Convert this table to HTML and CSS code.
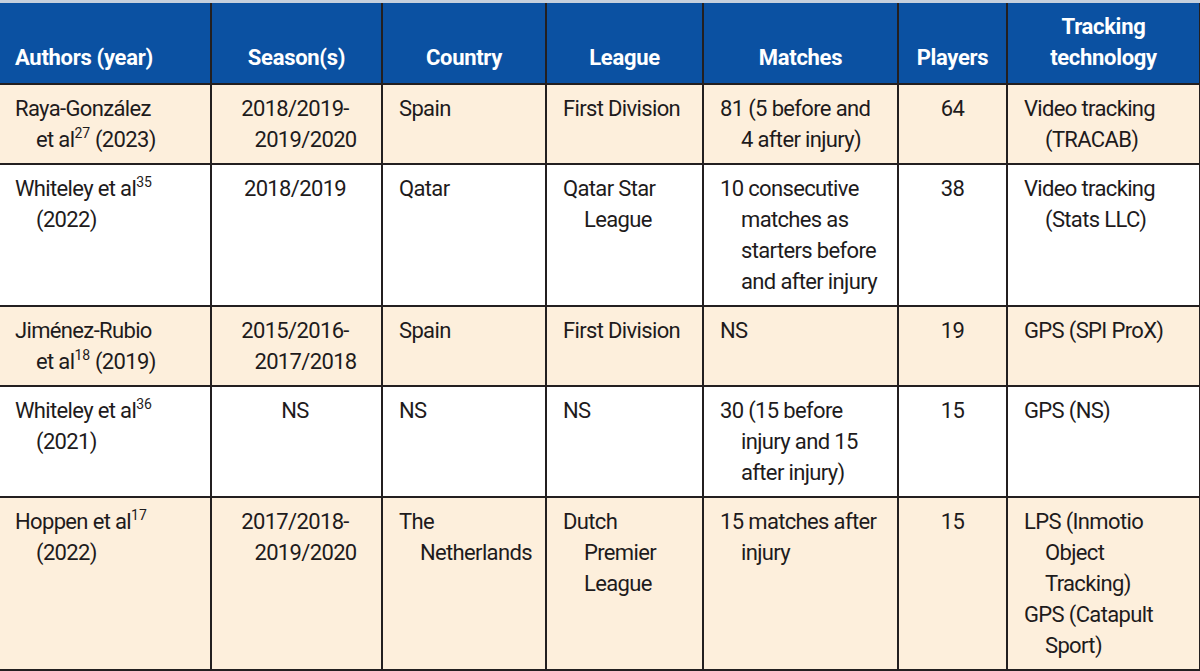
FILE: index.html
```html
<!DOCTYPE html>
<html>
<head>
<meta charset="utf-8">
<link rel="stylesheet" href="styles.css">
</head>
<body>
<table class="data">
  <colgroup>
    <col class="c1"><col class="c2"><col class="c3"><col class="c4"><col class="c5"><col class="c6"><col class="c7">
  </colgroup>
  <thead>
    <tr>
      <th class="left">Authors (year)</th>
      <th>Season(s)</th>
      <th>Country</th>
      <th>League</th>
      <th>Matches</th>
      <th>Players</th>
      <th>Tracking<br>technology</th>
    </tr>
  </thead>
  <tbody>
    <tr class="shade">
      <td class="hang">Raya-González<br>et al<sup>27</sup> (2023)</td>
      <td class="season">2018/2019-<br>2019/2020</td>
      <td class="hang">Spain</td>
      <td class="hang">First Division</td>
      <td class="hang">81 (5 before and<br>4 after injury)</td>
      <td class="num">64</td>
      <td class="hang">Video tracking<br>(TRACAB)</td>
    </tr>
    <tr>
      <td class="hang">Whiteley et al<sup>35</sup><br>(2022)</td>
      <td class="season">2018/2019</td>
      <td class="hang">Qatar</td>
      <td class="hang">Qatar Star<br>League</td>
      <td class="hang">10 consecutive<br>matches as<br>starters before<br>and after injury</td>
      <td class="num">38</td>
      <td class="hang">Video tracking<br>(Stats LLC)</td>
    </tr>
    <tr class="shade">
      <td class="hang">Jiménez-Rubio<br>et al<sup>18</sup> (2019)</td>
      <td class="season">2015/2016-<br>2017/2018</td>
      <td class="hang">Spain</td>
      <td class="hang">First Division</td>
      <td class="hang">NS</td>
      <td class="num">19</td>
      <td class="hang">GPS (SPI ProX)</td>
    </tr>
    <tr>
      <td class="hang">Whiteley et al<sup>36</sup><br>(2021)</td>
      <td class="season">NS</td>
      <td class="hang">NS</td>
      <td class="hang">NS</td>
      <td class="hang">30 (15 before<br>injury and 15<br>after injury)</td>
      <td class="num">15</td>
      <td class="hang">GPS (NS)</td>
    </tr>
    <tr class="shade">
      <td class="hang">Hoppen et al<sup>17</sup><br>(2022)</td>
      <td class="season">2017/2018-<br>2019/2020</td>
      <td class="hang">The<br>Netherlands</td>
      <td class="hang">Dutch<br>Premier<br>League</td>
      <td class="hang">15 matches after<br>injury</td>
      <td class="num">15</td>
      <td class="multi"><div class="entry">LPS (Inmotio<br>Object<br>Tracking)</div><div class="entry">GPS (Catapult<br>Sport)</div></td>
    </tr>
  </tbody>
</table>
</body>
</html>
```

FILE: styles.css
```css
html, body {
  margin: 0;
  padding: 0;
  background: #ffffff;
}

.data {
  width: 1200px;
  table-layout: fixed;
  border-collapse: collapse;
  font-family: Roboto, "Liberation Sans", sans-serif;
  font-size: 22px;
  line-height: 31px;
  color: #1e1b1c;
  border-top: 3px solid #c6d0dd;
  white-space: nowrap;
}

.c1 { width: 211px; }
.c2 { width: 171px; }
.c3 { width: 164px; }
.c4 { width: 157px; }
.c5 { width: 195px; }
.c6 { width: 109px; }
.c7 { width: 193px; }

.data th,
.data td {
  border: 2px solid #231f20;
  padding: 8px 4px 8px 16px;
  overflow: visible;
}

.data tr > :first-child {
  border-left: none;
}

.data thead th {
  background: #0b51a2;
  color: #ffffff;
  font-weight: bold;
  text-align: center;
  vertical-align: bottom;
  padding-left: 4px;
  padding-right: 4px;
  padding-bottom: 10px;
  letter-spacing: -0.3px;
}

.data thead th.left {
  text-align: left;
  padding-left: 15px;
}

.data td {
  vertical-align: top;
  letter-spacing: -0.65px;
}

.shade td {
  background: #fdefdc;
}

.hang {
  text-align: left;
  padding-left: 37px !important;
  text-indent: -21px;
}

.data tr > td.hang:first-child {
  padding-left: 36px !important;
}

.multi {
  text-align: left;
  padding-left: 16px !important;
}

.entry {
  padding-left: 21px;
  text-indent: -21px;
}

.season {
  text-align: center;
  padding-left: 18px !important;
  padding-right: 0 !important;
  text-indent: -21px;
}

.num {
  text-align: center;
  padding-left: 4px !important;
  padding-right: 4px !important;
}

sup {
  font-size: 14px;
  line-height: 0;
  vertical-align: 9px;
  letter-spacing: 0;
}
```
